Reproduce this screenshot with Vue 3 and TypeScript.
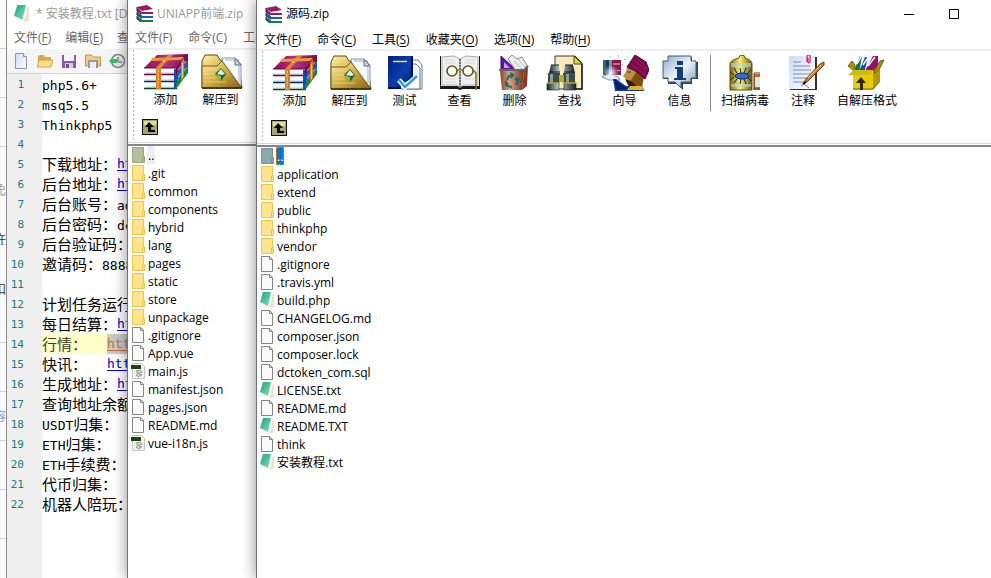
<script setup lang="ts">
interface Tool { icon: string; label: string }
interface FileEntry { name: string; kind: 'folder' | 'page' | 'note' | 'script' }
interface MenuItem { text: string; key?: string }
interface Line { text: string; gap?: boolean; link?: string; current?: boolean }

const entry = (kind: FileEntry['kind'], ...names: string[]): FileEntry[] =>
  names.map((name) => ({ name, kind }))

const backFiles: FileEntry[] = [
  ...entry('folder', '.git', 'common', 'components', 'hybrid', 'lang', 'pages', 'static', 'store', 'unpackage'),
  ...entry('page', '.gitignore', 'App.vue'),
  ...entry('script', 'main.js'),
  ...entry('page', 'manifest.json', 'pages.json', 'README.md'),
  ...entry('script', 'vue-i18n.js'),
]
const frontFiles: FileEntry[] = [
  ...entry('folder', 'application', 'extend', 'public', 'thinkphp', 'vendor'),
  ...entry('page', '.gitignore', '.travis.yml'),
  ...entry('note', 'build.php'),
  ...entry('page', 'CHANGELOG.md', 'composer.json', 'composer.lock', 'dctoken_com.sql'),
  ...entry('note', 'LICENSE.txt'),
  ...entry('page', 'README.md'),
  ...entry('note', 'README.TXT'),
  ...entry('page', 'think'),
  ...entry('note', '安装教程.txt'),
]

const backTools: Tool[] = [
  { icon: 'books', label: '添加' },
  { icon: 'extract', label: '解压到' },
]
const frontTools: Tool[] = [
  ...backTools,
  { icon: 'test', label: '测试' },
  { icon: 'view', label: '查看' },
  { icon: 'delete', label: '删除' },
  { icon: 'find', label: '查找' },
  { icon: 'wizard', label: '向导' },
  { icon: 'info', label: '信息' },
]
const extraTools: Tool[] = [
  { icon: 'virus', label: '扫描病毒' },
  { icon: 'comment', label: '注释' },
  { icon: 'sfx', label: '自解压格式' },
]

const editorMenu: MenuItem[] = [{ text: '文件', key: 'F' }, { text: '编辑', key: 'E' }, { text: '查看', key: 'V' }]
const archiveMenu: MenuItem[] = [
  { text: '文件', key: 'F' }, { text: '命令', key: 'C' }, { text: '工具', key: 'S' },
  { text: '收藏夹', key: 'O' }, { text: '选项', key: 'N' }, { text: '帮助', key: 'H' },
]
const editorTools: Tool[] = [
  { icon: 'e-new', label: '新建' }, { icon: 'e-open', label: '打开' }, { icon: 'e-save', label: '保存' },
  { icon: 'e-browse', label: '浏览' }, { icon: 'e-history', label: '历史' },
]

const lines: Line[] = [
  { text: 'php5.6+' }, { text: 'msq5.5' }, { text: 'Thinkphp5' }, { text: '' },
  { text: '下载地址：', link: 'http' }, { text: '后台地址：', link: 'http' },
  { text: '后台账号：ad' }, { text: '后台密码：dc' }, { text: '后台验证码：' }, { text: '邀请码：8888' },
  { text: '' }, { text: '计划任务运行' }, { text: '每日结算：', link: 'http' },
  { text: '行情：', gap: true, link: 'http', current: true }, { text: '快讯：', gap: true, link: 'http' },
  { text: '生成地址：', link: 'http' }, { text: '查询地址余额' }, { text: 'USDT归集：' },
  { text: 'ETH归集：' }, { text: 'ETH手续费：' }, { text: '代币归集：' }, { text: '机器人陪玩：' },
]

/** Splits a line into Latin and CJK runs, which are set at different sizes. */
const runs = (text: string): { text: string; latin: boolean }[] =>
  (text.match(/[\x20-\x7e]+|[^\x20-\x7e]+/g) ?? []).map((t) => ({ text: t, latin: /^[\x20-\x7e]/.test(t) }))
</script>

<template>
  <svg class="defs" aria-hidden="true">
    <defs>
      <linearGradient id="gold" x1="0" y1="0" x2="1" y2="1">
        <stop offset="0" stop-color="#fff3a8" /><stop offset=".5" stop-color="#d0ab42" /><stop offset="1" stop-color="#80601a" />
      </linearGradient>
      <linearGradient id="magenta" x1="0" y1="0" x2="1" y2="0">
        <stop offset="0" stop-color="#8e0f58" /><stop offset=".5" stop-color="#b5307f" /><stop offset="1" stop-color="#7d0b50" />
      </linearGradient>
      <linearGradient id="navy" x1="0" y1="0" x2="1" y2="1">
        <stop offset="0" stop-color="#04207c" /><stop offset=".6" stop-color="#0a3fae" /><stop offset="1" stop-color="#03155c" />
      </linearGradient>
      <linearGradient id="paper" x1="0" y1="0" x2="1" y2="1">
        <stop offset="0" stop-color="#c9dcf8" /><stop offset="1" stop-color="#ffffff" />
      </linearGradient>
      <linearGradient id="steel" x1="0" y1="0" x2="1" y2="0">
        <stop offset="0" stop-color="#1c2527" /><stop offset=".4" stop-color="#b7cbc9" /><stop offset="1" stop-color="#1b2526" />
      </linearGradient>
      <linearGradient id="copper" x1="0" y1="0" x2="1" y2="0">
        <stop offset="0" stop-color="#8c4426" /><stop offset=".4" stop-color="#e0a07c" /><stop offset="1" stop-color="#7c3015" />
      </linearGradient>
      <linearGradient id="brass" x1="0" y1="0" x2="1" y2="0">
        <stop offset="0" stop-color="#7b6200" /><stop offset=".45" stop-color="#fff27a" /><stop offset="1" stop-color="#6b5400" />
      </linearGradient>
      <linearGradient id="silver" x1="0" y1="0" x2="1" y2="1">
        <stop offset="0" stop-color="#8babc9" /><stop offset=".5" stop-color="#edf4fb" /><stop offset="1" stop-color="#7c94ac" />
      </linearGradient>
      <linearGradient id="teal" x1="0" y1="0" x2="1" y2="1">
        <stop offset="0" stop-color="#12a877" /><stop offset="1" stop-color="#8fdcc4" />
      </linearGradient>
      <radialGradient id="glow"><stop offset="0" stop-color="#fff" /><stop offset="1" stop-color="#cfe0ff" stop-opacity="0" /></radialGradient>
    </defs>

    <symbol id="books" viewBox="0 0 48 36">
      <path d="M34 28 46 13v6L34 35z" fill="#0c8a3e" /><path d="M34 21 46 7v6L34 28z" fill="#1656b8" />
      <path d="M34 14 46 0v7L34 21z" fill="#7a0b4d" />
      <path d="M36 15l8-9v2l-8 9zM36 22l8-9v2l-8 9z" fill="#78a7dd" />
      <path d="M3 14h31v6H3zM3 21h31v6H3zM3 28h31v6H3z" fill="#fff" />
      <path d="M3 19h31M3 26h31M3 33h31" stroke="#b9c7dd" stroke-width="1" />
      <path d="M2 20.5h33" stroke="#67063f" stroke-width="1.4" /><path d="M2 27.5h33" stroke="#07246d" stroke-width="1.6" /><path d="M2 34.5h33" stroke="#06451f" stroke-width="1.6" />
      <path d="M33 15v20" stroke="#1a4da8" stroke-width="2" />
      <path d="M2 14 15 1l31-1-12 14z" fill="url(#magenta)" /><path d="M2 14h32L46 0" fill="none" stroke="#5d0639" />
      <path d="M14 14 26 1h5L19 14z" fill="#e3872a" /><path d="M9 7 39 6l3-3-2 0-30 1z" fill="#ed9a36" />
      <path d="M14 14h5v21h-5zM39 8l3-4v19l-3 4z" fill="#e07b1e" /><path d="M16 15v19" stroke="#ffc66e" />
      <path d="M40.500 9v15" stroke="#ffc66e" /><g fill="#fff26a" stroke="#7a480a" stroke-width=".5"><circle cx="16.500" cy="17" r="1.300" /><circle cx="16.500" cy="25" r="1.300" /><circle cx="22" cy="7" r="1.500" /><circle cx="16.500" cy="31" r="1" /></g>
    </symbol>
    <symbol id="extract" viewBox="0 0 48 36">
      <path d="M5 34V7l3-6h12l3 5h18l4 28z" fill="url(#gold)" stroke="#5e470e" />
      <path d="M25 4h13l6 6v22L27 17z" fill="#f7faff" stroke="#8a97a7" /><path d="M28 6h9l5 6v16" fill="none" stroke="#9db5d2" />
      <path d="M38 4v7h6z" fill="#c7d5e5" stroke="#65727f" />
      <path d="M5 34V12h15l5-5 20 27z" fill="url(#gold)" stroke="#735719" />
      <path d="M7 16h17M7 20h12M7 24h11M7 28h22" stroke="#f4df8c" stroke-width=".8" opacity=".8" />
      <path d="m18 20 6-6 5 6-5 7z" fill="#196333" /><path d="m20 20 4-5 4 5-3 1z" fill="#e0f0df" /><path d="m18 20 6 2v5z" fill="#8abe55" />
      <path d="M5 34h40" stroke="#352707" stroke-width="1.500" />
    </symbol>
    <symbol id="test" viewBox="0 0 48 36">
      <path d="M31 5h6l4 5v24H26z" fill="#f7f9fc" stroke="#7a818b" /><path d="M28 9h7l4 4v21H20V24z" fill="#eef4fb" stroke="#6f7680" />
      <path d="M7 1h24v31H7z" fill="url(#navy)" /><path d="M31 1v22" stroke="#02104a" stroke-width="2" /><path d="M7 33h13" stroke="#041241" stroke-width="2" />
      <path d="M12 6.500h14" stroke="#e8dd78" stroke-width="1.500" /><path d="m20 30 12-7 5-3v13H20z" fill="#fff" />
      <path d="m18 25 6 7 12-11" fill="none" stroke="#fff" stroke-width="5" /><path d="m18 25 6 7 12-11" fill="none" stroke="#2d9bea" stroke-width="2.500" />
    </symbol>
    <symbol id="view" viewBox="0 0 48 36">
      <path d="M4 1h1v30h18l1 2 2-2h17V1h1v33H27l-3 1-3-1H4z" fill="#161616" />
      <path d="M6 2 18 1l6 3v28l-4-2H6zM42 2 30 1l-6 3v28l4-2h14z" fill="#eeeeee" stroke="#acacac" /><path d="M24 4v28" stroke="#555" stroke-dasharray="2 1" stroke-width="1.500" />
      <path d="M9 5h9M9 8h11M9 24h11M30 5h9M28 8h11M29 24h9M9 27h11" stroke="#dadada" />
      <g fill="#fff" stroke="#625511" stroke-width="1.600"><circle cx="16" cy="16" r="5" /><circle cx="32" cy="16" r="5" /></g>
      <path d="M21 16q3-3 6 0m10-1 3 3v17" fill="none" stroke="#8a7415" stroke-width="1.600" />
    </symbol>
    <symbol id="delete" viewBox="0 0 48 36">
      <path d="M10 15V1l15 14z" fill="#5c169c" stroke="#3b0870" /><path d="M13 13V7l6 6z" fill="#c8a0ef" />
      <path d="m17 4 4-4 5 4 5-2 6 10-4 4H25z" fill="#ececec" stroke="#8b8b8b" /><path d="m23 6 8 8m-4-10 7 8" stroke="#b9b9b9" />
      <path d="m9 16 24-1-2 20H11z" fill="url(#copper)" /><path d="m33 15 4-4-1 20-5 4z" fill="#843e23" />
      <path d="M8 15h25l4-4" fill="none" stroke="#626869" stroke-width="2" />
      <path d="m16 25 2-4 3 1m4 0 2 4-2 4m-4 2-5-1-1-3" fill="none" stroke="#0d717d" stroke-width="2" /><path d="m19 17 5 3-4 4zM29 23l-2 5-4-4zM14 25l4 4-4 2z" fill="#0d717d" />
    </symbol>
    <symbol id="find" viewBox="0 0 48 36">
      <path d="M9 1h20l7 7v26H9z" fill="#f8e9bf" stroke="#3d382d" /><path d="M28 1v8h8z" fill="#e7d42c" stroke="#564908" /><path d="M36 9v25H26" fill="none" stroke="#222" stroke-width="1.500" />
      <path d="M5 10h8l1 8H3zM19 10h8l2 8H18z" fill="url(#steel)" /><path d="M2 18h12v10H2zM17 18h12v10H17z" fill="#394b4a" />
      <path d="M4 19h3v9H4zM20 19h3v9h-3z" fill="#89a09c" /><path d="M1 28h12v7H1zM18 28h12v7H18z" fill="url(#steel)" stroke="#17201e" stroke-width=".6" />
      <path d="M1 28h13m3 0h13" stroke="#bbad35" stroke-width="1.500" /><path d="M13 20h5v7h-5z" fill="#b3a62e" /><path d="M5 10h8m6 0h8M4 17h10m4 0h10" stroke="#151c1b" />
    </symbol>
    <symbol id="wizard" viewBox="0 0 48 36">
      <path d="M2 5h18v15H2z" fill="#8d1450" /><path d="M2 5h3v14H2z" fill="#26744d" /><path d="M5 5h3v14H5z" fill="#163a78" /><path d="M8 5h3v14H8z" fill="#6ba08c" /><path d="M12 9h7" stroke="#eadb58" stroke-width="1" />
      <path d="m1 22 7-3 9 3 2 3H8z" fill="#edf2fa" stroke="#8190a2" /><circle cx="10" cy="18" r="8" fill="url(#glow)" />
      <path d="m12 24 3 0 10 7 16-1 2 6H14z" fill="#123c9c" /><path d="m13 24 3 11 11-1z" fill="#061e65" />
      <path d="m26 12 16 9-1 10-13 0-3-7-3-3 3-4z" fill="#c68e3a" /><path d="m36 16 7 6-2 10-10-3-1-4z" fill="#7b4e14" /><path d="m24 24 6 2 6 5-8 1z" fill="#2f1d0c" />
      <path d="m26 12 8-12 11 7 3 8-4 9-8-7z" fill="#7e0a4c" stroke="#480028" /><path d="m32 4 13 11m-16-7 15 12m-9-18 12 12" stroke="#a0306b" stroke-width=".6" />
      <path d="M26 17h4" stroke="#176bb0" stroke-width="1.500" /><path d="M26 35 29 31h12l3 4z" fill="#d9b52e" /><g fill="#aeb9c9"><path d="M9 1h1v1H9zM17 0h1v2h-1zM23 4h2v1h-2zM21 9h1v2h-1zM16 15h3v1h-3zM13 4h1v1h-1z" /></g>
    </symbol>
    <symbol id="info" viewBox="0 0 48 36">
      <path d="M12 2h24v5h6v17h-6v5H27v6l-6-6h-9v-5H7V7h5z" fill="#35424f" /><path d="M12 1h23v5h5v17h-5v4H25v6l-6-6h-7v-4H7V6h5z" fill="url(#silver)" stroke="#455b71" />
      <path d="M21 6h6v4h-6zM19 12h8v11h3v2H18v-2h3v-9h-2z" fill="#123f7c" />
    </symbol>
    <symbol id="virus" viewBox="0 0 48 36">
      <path d="M18 3q0-3 3-3t3 3q7 2 7 6v26H9V9q0-4 9-6z" fill="url(#brass)" stroke="#675409" /><path d="M10 8h20v4H10zM10 29h20v3H10z" fill="#bcd8cf" opacity=".6" />
      <path d="M33 19h6v16h-6z" fill="#b76a3c" /><path d="M34 22h5v10h-5z" fill="#dce7e6" /><path d="M33 18h6M33 34h6M33 18v17" stroke="#6c3b0c" />
      <ellipse cx="21" cy="21" rx="7" ry="3" fill="#3868c8" stroke="#0b2666" /><path d="m16 18-3-5m7 5-1-5m4 5 2-5m1 6 4-4M16 24l-3 4m7-4-1 5m4-5 2 5m1-7 4 4M13 20l-4-3m4 5-4 3" fill="none" stroke="#0b2350" />
    </symbol>
    <symbol id="comment" viewBox="0 0 48 36">
      <path d="M11 2h27v33H11z" fill="#333" /><path d="M10 1h26v33H10z" fill="url(#paper)" />
      <path d="M14 7h8M14 11h17M14 15h18M14 19h18M14 23h14M14 27h12" stroke="#7890ae" /><path d="M28 7V2q0-2 2-2t1 3v4q-1 2-2 0V3" fill="none" stroke="#d11f53" stroke-width="1.200" />
      <path d="m24 29 3-5L41 9l4-2v3L29 26z" fill="#d67b24" stroke="#76380a" /><path d="m29 23 13-13" stroke="#ffcd7b" /><path d="m24 29 3-2" stroke="#111" stroke-width="2" /><path d="m22 31 3-2 5 4" fill="none" stroke="#777" />
    </symbol>
    <symbol id="sfx" viewBox="0 0 48 36">
      <path d="m12 12 5-12h18l-6 19H12z" fill="#f5f5f5" /><path d="m12 13 5-12 2 0-3 17h-4z" fill="#0b7948" /><path d="m17 14 5-12 3 0-4 17h-4z" fill="#1353ad" /><path d="m23 14 7-13h5v9l-6 9h-6z" fill="#96106b" /><path d="m14 9 5-9m1 10 6-9m-1 10 7-9" stroke="#fff" stroke-width="1.500" />
      <path d="M10 15h20v20H10z" fill="#e4cd0b" /><path d="m30 16 7-7v17l-7 9z" fill="#b49800" /><path d="m10 15-5-4 4-5 3 4v9zM31 17l6-11 4-1-4 8-5 5z" fill="#a69112" stroke="#756408" /><path d="M5 20 11 15h19l-3 5z" fill="#d1bb0b" />
      <path d="M10 34h20l7-8" fill="none" stroke="#806d00" /><path d="m18 22 5 6h-3v7h-3v-7h-4z" fill="#302703" />
    </symbol>

    <symbol id="up" viewBox="0 0 16 16"><path d="M0 0h16v16H0z" fill="#111" /><path d="M1 1h14v14H1z" fill="#a8a46a" /><path d="M2 2h12v4H2z" fill="#dedba8" /><path d="m7 3 5 5H9v3h4v2H6V8H3z" fill="#000" /></symbol>
    <symbol id="logo" viewBox="0 0 18 17">
      <path d="M1 2 11 0l6 4-11 2zM1 2v4l5 3h11V7H6z" fill="#9a1860" /><path d="m6 6 11-1v2H6z" fill="#fff" /><path d="m1 7 5 3h11v3H6L1 10z" fill="#195fbd" /><path d="M6 10h11v1H6z" fill="#fff" /><path d="m1 11 5 3h11v3H5l-4-3z" fill="#128151" /><path d="M6 14h11v1H6z" fill="#fff" /><path d="M1 2v4l4 3M1 7v3l5 3M1 11v3l4 3" fill="none" stroke="#252a3b" />
    </symbol>
    <symbol id="folder" viewBox="0 0 14 16"><path d="M.5.500h11v9h1v6H.5z" fill="#ffe48c" stroke="#ecc64d" /><path d="M10.500 15v-5h1" fill="none" stroke="#eac447" /></symbol>
    <symbol id="page" viewBox="0 0 14 16"><path d="M.5.500h8l3 3v12H.5z" fill="#fbfbfb" stroke="#858585" /><path d="M8.500.500v3h3" fill="none" stroke="#858585" /></symbol>
    <symbol id="note" viewBox="0 0 14 16"><path d="m10 1 4 1v13l-5 1z" fill="#e9e4cf" /><path d="m9 14 3-12" stroke="#f8faf3" stroke-width="2" /><path d="M3 0h8L8 14l-8-4z" fill="url(#teal)" /></symbol>
    <symbol id="script" viewBox="0 0 14 16"><path d="M1.500.500h9l3 3v12h-12z" fill="#f1f1f1" stroke="#c5c5c5" /><path d="M0 2h10v4H0z" fill="#1b4608" /><path d="m5 8 4-1 2 2-3 2 3 1-4 2-2-2 2-1z" fill="#c9c9c9" stroke="#888" stroke-width=".7" /></symbol>

    <symbol id="e-new" viewBox="0 0 16 16"><path d="M2.500.500h8l3 3v12h-11z" fill="url(#paper)" stroke="#8995a8" /><path d="M10.500.500v3h3" fill="#fff" stroke="#8995a8" /></symbol>
    <symbol id="e-open" viewBox="0 0 16 16"><path d="M1 14V3l2-1h4l1 2h6v10z" fill="#dca850" /><path d="m0 14 2-7h14l-2 7z" fill="#ffda86" stroke="#c8943d" stroke-width=".8" /></symbol>
    <symbol id="e-save" viewBox="0 0 16 16"><path d="M1 2h14v13H1z" fill="#9056b7" /><path d="M3 2h10v6H3z" fill="#f6f7fb" /><path d="M4 10h8v5H4z" fill="#d5d0de" /><path d="M5 11h3v4H5z" fill="#76519a" /></symbol>
    <symbol id="e-browse" viewBox="0 0 16 16"><path d="M.5 13V2h6l2 2h7v9z" fill="#f3cd7c" stroke="#c59548" /><path d="M3 7h10v8H3z" fill="#8f9aac" /><path d="M5 9h6v6H5z" fill="#eef0f3" /></symbol>
    <symbol id="e-history" viewBox="0 0 16 16"><circle cx="9" cy="8" r="6.500" fill="#e7eaec" stroke="#81888e" stroke-width="1.500" /><path d="M9 4v5h4" fill="none" stroke="#555f67" /><path d="m0 8 4-4v2h4v4H4v2z" fill="#48b36d" /></symbol>
  </svg>

  <main class="desktop">
    <aside class="behind">
      <span>最免</span><span>允许</span><span>折扣</span><span>内容</span>
    </aside>

    <section class="window editor">
      <header class="title">
        <svg class="title-note"><use href="#note" /></svg>
        <h2>* 安装教程.txt [D:\源码]</h2>
      </header>
      <nav class="menu">
        <button v-for="m in editorMenu" :key="m.key">{{ m.text }}(<u>{{ m.key }}</u>)</button>
      </nav>
      <div class="editor-tools">
        <button v-for="t in editorTools" :key="t.icon" :aria-label="t.label"><svg><use :href="'#' + t.icon" /></svg></button>
      </div>
      <ol class="code">
        <li v-for="(line, i) in lines" :key="i" :class="{ current: line.current }">
          <span class="num">{{ i + 1 }}</span>
          <span class="text">
            <span class="lead" :class="{ tabbed: line.gap }"><span v-for="(r, j) in runs(line.text)" :key="j" :class="{ latin: r.latin }">{{ r.text }}</span></span><a v-if="line.link" href="#" class="latin">{{ line.link }}</a>
          </span>
        </li>
      </ol>
    </section>

    <section class="window archive inactive">
      <header class="title">
        <svg class="logo"><use href="#logo" /></svg>
        <h2>UNIAPP前端.zip</h2>
      </header>
      <nav class="menu">
        <button v-for="m in archiveMenu" :key="m.key">{{ m.text }}({{ m.key }})</button>
      </nav>
      <div class="panel">
        <div class="tools">
          <button v-for="t in backTools" :key="t.icon" class="tool"><svg><use :href="'#' + t.icon" /></svg>{{ t.label }}</button>
        </div>
        <button class="up" aria-label="向上"><svg><use href="#up" /></svg></button>
      </div>
      <ul class="files">
        <li class="parent"><svg><use href="#folder" /></svg><span>..</span></li>
        <li v-for="f in backFiles" :key="f.name" :class="f.kind"><svg><use :href="'#' + f.kind" /></svg><span>{{ f.name }}</span></li>
      </ul>
    </section>

    <section class="window archive active">
      <header class="title">
        <svg class="logo"><use href="#logo" /></svg>
        <h1>源码.zip</h1>
        <div class="controls">
          <button aria-label="最小化"><svg viewBox="0 0 10 10"><path d="M0 5.500h10" stroke="#000" /></svg></button>
          <button aria-label="最大化"><svg viewBox="0 0 10 10"><path d="M.5.500h9v9h-9z" fill="none" stroke="#000" /></svg></button>
        </div>
      </header>
      <nav class="menu">
        <button v-for="m in archiveMenu" :key="m.key">{{ m.text }}(<u>{{ m.key }}</u>)</button>
      </nav>
      <div class="panel">
        <div class="tools">
          <button v-for="t in frontTools" :key="t.icon" class="tool"><svg><use :href="'#' + t.icon" /></svg>{{ t.label }}</button>
          <i class="divider"></i>
          <button v-for="t in extraTools" :key="t.icon" class="tool wide"><svg><use :href="'#' + t.icon" /></svg>{{ t.label }}</button>
        </div>
        <button class="up" aria-label="向上"><svg><use href="#up" /></svg></button>
      </div>
      <ul class="files">
        <li class="parent"><svg><use href="#folder" /></svg><span>..</span></li>
        <li v-for="f in frontFiles" :key="f.name" :class="f.kind"><svg><use :href="'#' + f.kind" /></svg><span>{{ f.name }}</span></li>
      </ul>
    </section>
  </main>
</template>

<style>
body { overflow: hidden; background: #fff; }
</style>

<style scoped>
.defs { position: absolute; width: 0; height: 0; }
.desktop {
  display: grid;
  grid-template-columns: 6px 121px 129px minmax(0, 1fr);
  min-height: 100vh;
  font: 12px/18px "Open Sans", "Noto Sans CJK SC", sans-serif;
  color: #000;
}
button { box-sizing: border-box; border: 0; padding: 0; background: none; font: inherit; color: inherit; white-space: nowrap; flex-shrink: 0; }
svg { display: block; flex-shrink: 0; }
h1, h2 { margin: 0; font: inherit; white-space: nowrap; }
ul, ol { margin: 0; padding: 0; list-style: none; }

.behind {
  display: flex; flex-direction: column; align-items: flex-end; gap: 32px;
  overflow: hidden; padding-top: 181px; color: #333; white-space: nowrap;
  background: repeating-linear-gradient(#fafafa 0 48px, #d6d6d6 48px 49px);
}
.behind span:first-child { color: #a39c92; }
.behind span:last-child { color: #79a4d0; margin-top: 77px; }

.window { display: flex; flex-direction: column; min-width: 0; background: #fff; isolation: isolate; box-shadow: 0 0 14px rgba(0, 0, 0, .45); }
.title { display: flex; align-items: center; height: 27px; overflow: hidden; }
.menu { box-sizing: border-box; display: flex; gap: 16px; height: 21px; align-items: center; padding-left: 7px; overflow: hidden; }
.menu u { text-underline-offset: 2px; }

.editor { border-left: 1px solid #8b8b8b; overflow: hidden; box-shadow: none; }
.editor .title, .inactive .title { color: #999; }
.editor .title { gap: 7px; padding-left: 7px; }
.title-note { width: 15px; height: 17px; }
.editor .menu, .inactive .menu { color: #666; }
.editor .menu { height: 22px; gap: 14px; }
.editor-tools { display: flex; align-items: center; height: 24px; background: #f5f5f5; border-bottom: 1px solid #d3d3d3; padding-left: 2px; overflow: hidden; }
.editor-tools button { width: 24px; display: flex; justify-content: center; }
.editor-tools svg { width: 16px; height: 16px; }
.code { flex: 1; background: linear-gradient(90deg, #efefef 35px, #fff 35px); }
.code li { display: flex; height: 20px; white-space: nowrap; }
.num { width: 17px; flex-shrink: 0; margin-right: 18px; text-align: right; color: #128080; font: 11px/22px "DejaVu Sans Mono", monospace; }
.text { display: flex; flex: 1; font: 15px/20px "Noto Sans CJK SC", sans-serif; }
.lead.tabbed { min-width: 65px; }
.latin { font: 13px/20px "DejaVu Sans Mono", monospace; }
.text a { color: #0000c8; text-underline-offset: 2px; }
.current .text { background: #ffffc8; color: #3c3c1e; }
.current a { background: #c8c8c8; color: #c87137; }

.archive { border-left: 1px solid #6f737a; }
.archive .title { padding-left: 8px; gap: 3px; }
.logo { width: 18px; height: 17px; }
.controls { display: flex; margin-left: auto; padding-right: 15px; }
.controls button { width: 45px; display: flex; justify-content: center; }
.controls svg { width: 10px; height: 10px; }
.panel { border-top: 2px solid #efefef; border-bottom: 1px solid #d8d8d8; padding: 4px 0 7px 10px; background: linear-gradient(#fff, #fff) 6px 0 / 100% 100% no-repeat, repeating-linear-gradient(#b8b8b8 0 2px, #fff 2px 4px) 5px 0 / 1px 100% no-repeat; }
.tools { display: flex; height: 65px; }
.tool { width: 55px; display: flex; flex-direction: column; align-items: center; justify-content: flex-start; line-height: 18px; }
.tool svg { width: 48px; height: 36px; margin-bottom: 1px; }
.tool.wide { width: auto; min-width: 48px; padding: 0 5px; }
.divider { width: 1px; height: 56px; margin: 0 5px 0 3px; background: #858585; }
.up { display: block; margin-left: 4px; }
.up svg { width: 16px; height: 16px; }
.files { flex: 1; margin-top: 1px; border-top: 2px solid #828790; }
.files li { display: flex; align-items: center; height: 18px; gap: 1px; padding-left: 4px; white-space: nowrap; }
.files svg { width: 14px; height: 16px; }
.files li span { padding: 2px 1px 0; line-height: 16px; }
.active .title { height: 28px; }
.active .menu { padding-top: 2px; }
.active .parent svg { filter: hue-rotate(140deg) saturate(.4) brightness(.72); }
.active .parent span { background: #0078d7; color: #fff; outline: 1px dotted #ff8728; outline-offset: -1px; }
.active .note svg, .inactive .script svg { margin-left: -1px; margin-right: 1px; }
.inactive .parent svg { filter: hue-rotate(30deg) saturate(.4) brightness(.82); }
.inactive .parent span { background: #eee; }
</style>
